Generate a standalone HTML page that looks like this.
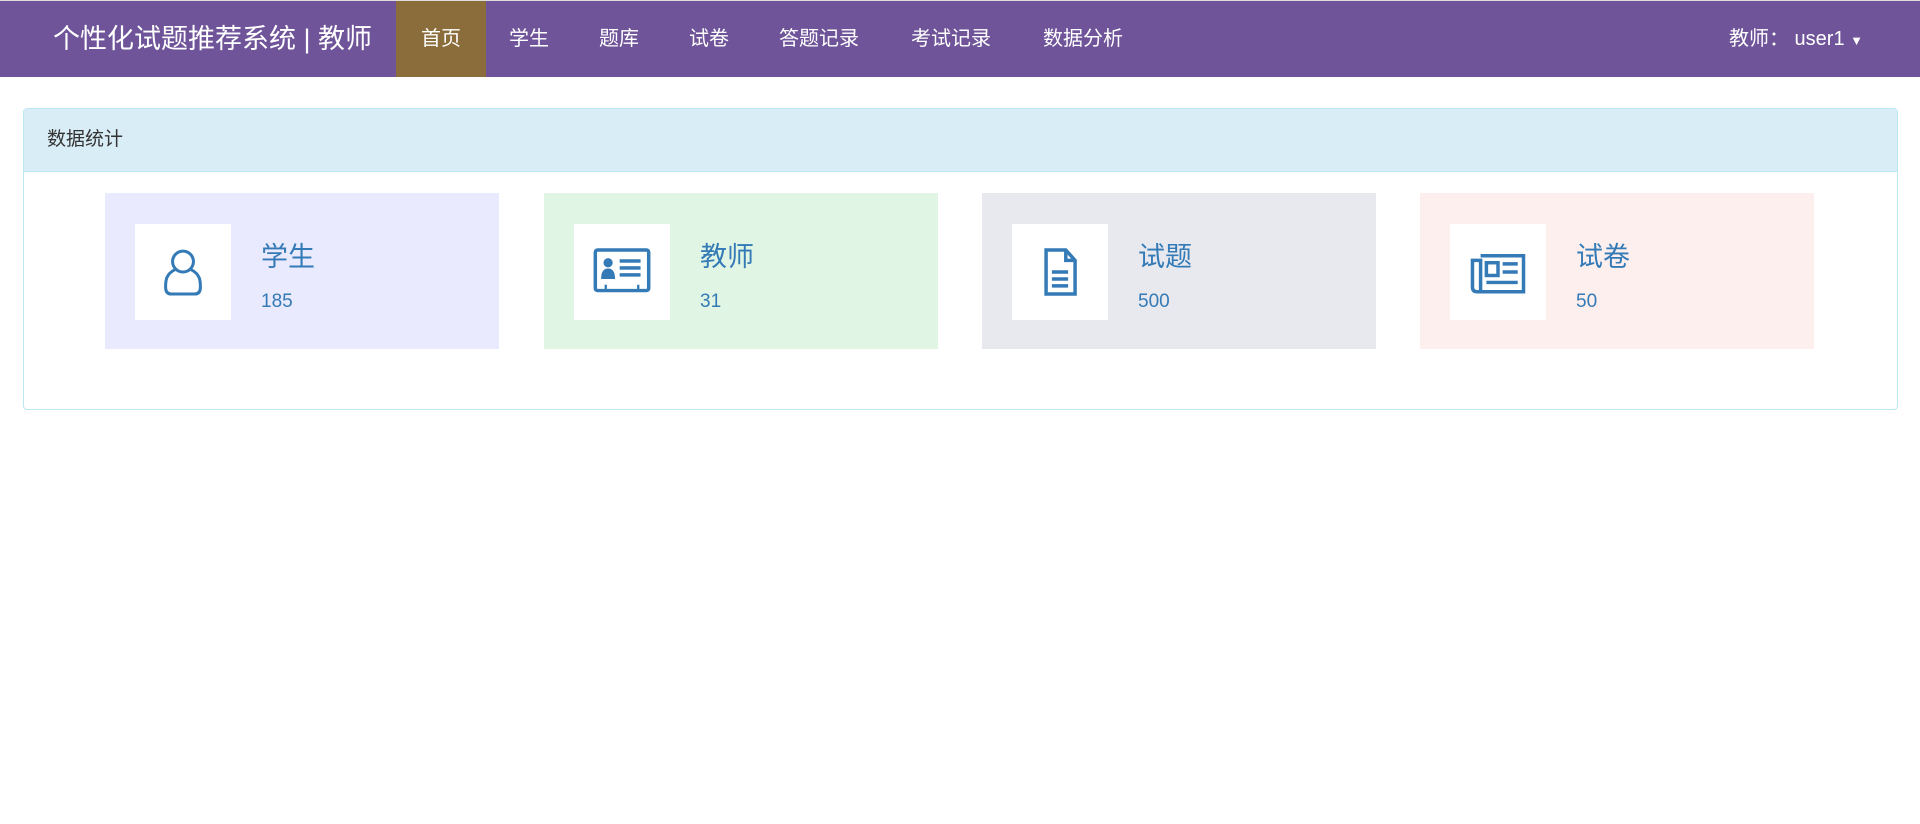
<!DOCTYPE html>
<html><head><meta charset="utf-8"><style>
*{box-sizing:border-box;margin:0;padding:0}
body{width:1920px;height:824px;background:#fff;font-family:"Liberation Sans","Noto Sans CJK SC",sans-serif;position:relative;overflow:hidden}
.nav{position:absolute;left:0;top:0;width:1920px;height:77px;background:#6f5499;border-top:1px solid #ddd}
.brand{position:absolute;left:53px;top:0;height:76px;line-height:76px;color:#fff;font-size:27px}
.item{position:absolute;top:0;height:76px;line-height:76px;color:#fff;font-size:20px;text-align:center}
.active{background:#8a6d3b}
.panel{position:absolute;left:23px;top:108px;width:1875px;height:302px;border:1px solid #bce8f1;border-radius:4px}
.ph{height:63px;background:#d9edf7;border-bottom:1px solid #bce8f1;color:#333;font-size:19px;line-height:62px;padding-left:23px}
.card{position:absolute;top:193px;width:394px;height:156px}
.ib{position:absolute;left:30px;top:31px;width:96px;height:96px;background:#fff}
.ib svg{position:absolute;left:19px;top:19px}
.t{position:absolute;left:156px;top:49px;font-size:27px;color:#337ab7;line-height:30px}
.n{position:absolute;left:156px;top:99px;font-size:19px;color:#337ab7;line-height:20px}
</style></head><body>
<div class="nav">
<div class="brand">个性化试题推荐系统 | 教师</div>
<div class="item active" style="left:396px;width:90px">首页</div>
<div class="item" style="left:509px">学生</div>
<div class="item" style="left:599px">题库</div>
<div class="item" style="left:689px">试卷</div>
<div class="item" style="left:779px">答题记录</div>
<div class="item" style="left:911px">考试记录</div>
<div class="item" style="left:1043px">数据分析</div>
<div class="item" style="left:1729px">教师： user1 <span style="font-size:13px">▼</span></div>
</div>
<div class="panel"><div class="ph">数据统计</div></div>
<div class="card" style="left:105px;background:#e9eafd"><div class="ib"><svg width="58" height="58" viewBox="0 0 50 50" fill="none" stroke="#337ab7" stroke-width="2.6"><circle cx="25" cy="16" r="9"/><path d="M18 23 C10 27 10 33 10 38 Q10 44 15 44 H35 Q40 44 40 38 C40 33 40 27 32 23"/></svg></div><div class="t">学生</div><div class="n">185</div></div>
<div class="card" style="left:544px;background:#e0f5e3"><div class="ib"><svg width="58" height="58" viewBox="0 0 50 50"><rect x="2" y="6" width="46" height="35" rx="2" fill="none" stroke="#337ab7" stroke-width="3"/><circle cx="13" cy="17" r="4" fill="#337ab7"/><path d="M7 31 Q7 22 13 22 Q19 22 19 31Z" fill="#337ab7"/><rect x="23" y="14" width="18" height="3" fill="#337ab7"/><rect x="23" y="20" width="18" height="3" fill="#337ab7"/><rect x="23" y="26" width="18" height="3" fill="#337ab7"/><rect x="10" y="36" width="2" height="5" fill="#337ab7"/><rect x="38" y="36" width="2" height="5" fill="#337ab7"/></svg></div><div class="t">教师</div><div class="n">31</div></div>
<div class="card" style="left:982px;background:#e8e9ee"><div class="ib"><svg width="58" height="58" viewBox="0 0 50 50" fill="none" stroke="#337ab7" stroke-width="3"><path d="M13 6 H30 L38 15 V44 H13Z M30 6 V15 H38"/><path d="M18 25H32M18 31H32M18 37H32"/></svg></div><div class="t">试题</div><div class="n">500</div></div>
<div class="card" style="left:1420px;background:#fdefee"><div class="ib"><svg width="58" height="58" viewBox="0 0 50 50" fill="none" stroke="#337ab7" stroke-width="3"><path d="M10 11 H47 V42 H7 Q3 42 3 38 V15 H10 V42"/><rect x="15" y="17" width="10" height="11"/><path d="M29 18H42M29 25H42M15 34H42"/></svg></div><div class="t">试卷</div><div class="n">50</div></div>
</body></html>
